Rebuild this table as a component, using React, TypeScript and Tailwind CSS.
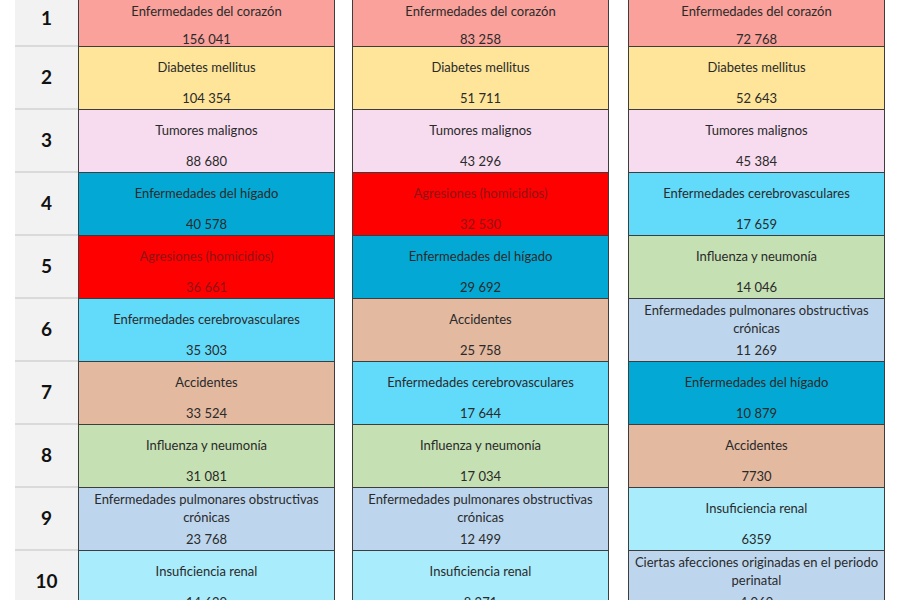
type Cause = { name: string; value: string; bg: string; text?: string };

const C = {
  corazon: "bg-[#f9a19a]",
  diabetes: "bg-[#fee599]",
  tumores: "bg-[#f7dbef]",
  higado: "bg-[#03a9d4]",
  agresiones: "bg-[#fe0000]",
  cerebro: "bg-[#62dbfb]",
  influenza: "bg-[#c5e0b3]",
  accidentes: "bg-[#e3b9a0]",
  pulmonares: "bg-[#bdd6ee]",
  renal: "bg-[#a9edfd]",
};

const RED_TEXT = "text-[#8e1414]";

const rows: Cause[][] = [
  [
    { name: "Enfermedades del corazón", value: "156 041", bg: C.corazon },
    { name: "Enfermedades del corazón", value: "83 258", bg: C.corazon },
    { name: "Enfermedades del corazón", value: "72 768", bg: C.corazon },
  ],
  [
    { name: "Diabetes mellitus", value: "104 354", bg: C.diabetes },
    { name: "Diabetes mellitus", value: "51 711", bg: C.diabetes },
    { name: "Diabetes mellitus", value: "52 643", bg: C.diabetes },
  ],
  [
    { name: "Tumores malignos", value: "88 680", bg: C.tumores },
    { name: "Tumores malignos", value: "43 296", bg: C.tumores },
    { name: "Tumores malignos", value: "45 384", bg: C.tumores },
  ],
  [
    { name: "Enfermedades del hígado", value: "40 578", bg: C.higado },
    { name: "Agresiones (homicidios)", value: "32 530", bg: C.agresiones, text: RED_TEXT },
    { name: "Enfermedades cerebrovasculares", value: "17 659", bg: C.cerebro },
  ],
  [
    { name: "Agresiones (homicidios)", value: "36 661", bg: C.agresiones, text: RED_TEXT },
    { name: "Enfermedades del hígado", value: "29 692", bg: C.higado },
    { name: "Influenza y neumonía", value: "14 046", bg: C.influenza },
  ],
  [
    { name: "Enfermedades cerebrovasculares", value: "35 303", bg: C.cerebro },
    { name: "Accidentes", value: "25 758", bg: C.accidentes },
    { name: "Enfermedades pulmonares obstructivas crónicas", value: "11 269", bg: C.pulmonares },
  ],
  [
    { name: "Accidentes", value: "33 524", bg: C.accidentes },
    { name: "Enfermedades cerebrovasculares", value: "17 644", bg: C.cerebro },
    { name: "Enfermedades del hígado", value: "10 879", bg: C.higado },
  ],
  [
    { name: "Influenza y neumonía", value: "31 081", bg: C.influenza },
    { name: "Influenza y neumonía", value: "17 034", bg: C.influenza },
    { name: "Accidentes", value: "7730", bg: C.accidentes },
  ],
  [
    { name: "Enfermedades pulmonares obstructivas crónicas", value: "23 768", bg: C.pulmonares },
    { name: "Enfermedades pulmonares obstructivas crónicas", value: "12 499", bg: C.pulmonares },
    { name: "Insuficiencia renal", value: "6359", bg: C.renal },
  ],
  [
    { name: "Insuficiencia renal", value: "14 620", bg: C.renal },
    { name: "Insuficiencia renal", value: "8 271", bg: C.renal },
    { name: "Ciertas afecciones originadas en el periodo perinatal", value: "4 069", bg: C.pulmonares },
  ],
];

function CauseCell({ cause, first, className }: { cause: Cause; first: boolean; className?: string }) {
  return (
    <div
      className={`flex w-[257px] flex-col border-x border-b border-[#3d3d3d] ${cause.bg} ${
        cause.text ?? "text-[#2a2a2a]"
      } ${className ?? ""}`}
    >
      <div
        className={`flex ${first ? "h-[38px]" : "h-[40px]"} shrink-0 items-center justify-center px-1 text-center leading-[18px]`}
      >
        {cause.name}
      </div>
      <div className={`flex flex-1 items-center justify-center ${first ? "" : "pt-[2px]"}`}>{cause.value}</div>
    </div>
  );
}

export default function App() {
  return (
    <div
      className="h-[600px] w-[900px] overflow-hidden bg-white text-[13px]"
      style={{ fontFamily: "Lato, 'Noto Sans', sans-serif" }}
    >
      <div className="-mt-[8px] pl-[15px]">
        {rows.map((row, i) => (
          <div key={i} className={`flex ${i === 0 ? "h-[55px]" : "h-[63px]"}`}>
            <div className="flex w-[63px] items-center justify-center border-b-2 border-[#dadada] bg-[#f2f2f2] text-[19px] font-bold text-[#111]">
              {i + 1}
            </div>
            <CauseCell cause={row[0]} first={i === 0} />
            <CauseCell cause={row[1]} first={i === 0} className="ml-[17px]" />
            <CauseCell cause={row[2]} first={i === 0} className="ml-[19px]" />
          </div>
        ))}
      </div>
    </div>
  );
}
